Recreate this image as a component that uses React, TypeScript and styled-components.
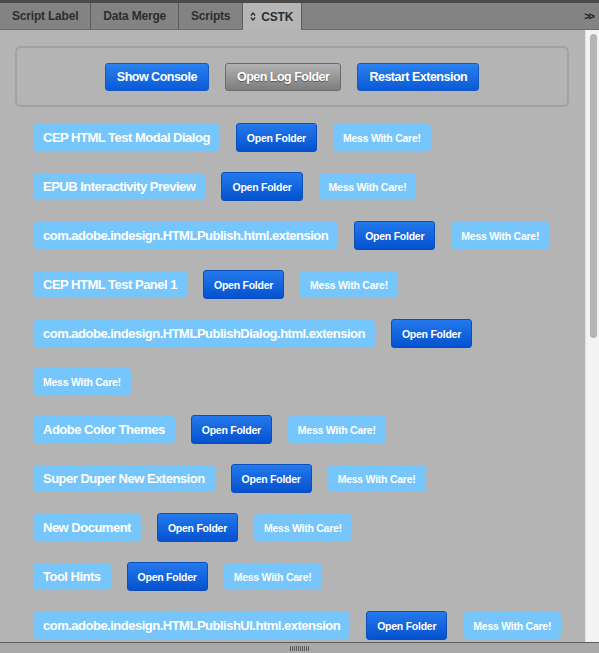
import React from "react";
import styled, { createGlobalStyle } from "styled-components";

const GlobalStyle = createGlobalStyle`
  html, body {
    margin: 0;
    padding: 0;
    background: #b4b4b4;
  }
  body {
    font-family: "Liberation Sans", Arial, Helvetica, sans-serif;
  }
`;

const Frame = styled.div`
  width: 599px;
  height: 653px;
  display: flex;
  flex-direction: column;
  overflow: hidden;
  background: #b4b4b4;
`;

const TopStrip = styled.div`
  height: 3px;
  background: #4a4a4a;
  flex-shrink: 0;
`;

const TabBar = styled.div`
  height: 26px;
  display: flex;
  align-items: stretch;
  background: #838383;
  border-bottom: 1px solid #6a6a6a;
  flex-shrink: 0;
`;

const Tab = styled.div<{ $active?: boolean }>`
  display: flex;
  align-items: center;
  gap: 5px;
  padding: ${({ $active }) => ($active ? "0 8px 0 7px" : "0 12px")};
  font-size: 12px;
  letter-spacing: -0.2px;
  font-weight: bold;
  color: #2e2e2e;
  background: ${({ $active }) => ($active ? "#b6b6b6" : "#838383")};
  border-right: 1px solid #5c5c5c;
  margin-bottom: ${({ $active }) => ($active ? "-1px" : "0")};
`;

const TabSpacer = styled.div`
  flex: 1;
  display: flex;
  align-items: center;
  justify-content: flex-end;
  padding-right: 6px;
  font-size: 11px;
  font-weight: bold;
  color: #1c1c2a;
  letter-spacing: -2px;
`;

const Body = styled.div`
  flex: 1;
  display: flex;
  min-height: 0;
`;

const Content = styled.div`
  flex: 1;
  overflow: hidden;
  padding: 16px 0 0 0;
`;

const Scrollbar = styled.div`
  width: 14px;
  background: #f3f3f3;
  border-left: 1px solid #e2e2e2;
  padding: 4px 2px 0 4px;
  box-sizing: border-box;
  flex-shrink: 0;
`;

const Thumb = styled.div`
  height: 304px;
  background: #b4b4b4;
  border-radius: 4px;
`;

const Panel = styled.div`
  margin: 0 16px 0 15px;
  height: 57px;
  border: 2px solid #a1a1a1;
  border-radius: 6px;
  display: flex;
  align-items: center;
  justify-content: center;
  gap: 16px;
`;

const PanelButton = styled.button<{ $grey?: boolean }>`
  height: 28px;
  padding: 0 11px;
  font-family: inherit;
  font-size: 12.5px;
  letter-spacing: -0.5px;
  font-weight: bold;
  color: #fff;
  border-radius: 3px;
  border: 1px solid ${({ $grey }) => ($grey ? "#6c6c6c" : "#1458c4")};
  background: ${({ $grey }) =>
    $grey
      ? "linear-gradient(#b2b2b2, #7d7d7d)"
      : "linear-gradient(#2a80ee, #0a5ad6)"};
  text-shadow: ${({ $grey }) => ($grey ? "0 1px 1px #555" : "none")};
`;

const List = styled.div`
  display: flex;
  flex-direction: column;
  gap: 20px;
  padding: 16px 18px 0 33px;
`;

const ExtRow = styled.div`
  display: flex;
  flex-wrap: wrap;
  align-items: center;
  column-gap: 16px;
  row-gap: 20px;
`;

const ExtLabel = styled.div`
  height: 27px;
  display: flex;
  align-items: center;
  padding: 0 10px;
  background: #76c6fb;
  border-radius: 4px;
  font-size: 13px;
  letter-spacing: -0.5px;
  font-weight: bold;
  color: #fff;
  white-space: nowrap;
`;

const FolderButton = styled.button`
  height: 29px;
  padding: 0 10px;
  font-family: inherit;
  font-size: 10.5px;
  letter-spacing: -0.25px;
  font-weight: bold;
  color: #fff;
  border-radius: 3px;
  border: 1px solid #0d4fba;
  background: linear-gradient(#2479ec, #0452cf);
`;

const CareButton = styled.button`
  height: 27px;
  padding: 0 10px;
  font-family: inherit;
  font-size: 10.5px;
  letter-spacing: -0.25px;
  font-weight: bold;
  color: #fff;
  border: none;
  border-radius: 4px;
  background: #76c6fb;
`;

const BottomBar = styled.div`
  height: 10px;
  flex-shrink: 0;
  background: #a9a9a9;
  border-top: 1px solid #5d5d5d;
  display: flex;
  justify-content: center;
  align-items: center;
`;

const Grip = styled.div`
  width: 19px;
  height: 5px;
  background: repeating-linear-gradient(
    90deg,
    #5a5a5a 0 1px,
    transparent 1px 2px
  );
`;

const extensions = [
  "CEP HTML Test Modal Dialog",
  "EPUB Interactivity Preview",
  "com.adobe.indesign.HTMLPublish.html.extension",
  "CEP HTML Test Panel 1",
  "com.adobe.indesign.HTMLPublishDialog.html.extension",
  "Adobe Color Themes",
  "Super Duper New Extension",
  "New Document",
  "Tool Hints",
  "com.adobe.indesign.HTMLPublishUI.html.extension",
];

const App = () => (
  <>
    <GlobalStyle />
    <Frame>
      <TopStrip />
      <TabBar>
        <Tab>Script Label</Tab>
        <Tab>Data Merge</Tab>
        <Tab>Scripts</Tab>
        <Tab $active>
          <svg width="6" height="9" viewBox="0 0 6 9">
            <path d="M0.8 3.5 L3 1 L5.2 3.5 M0.8 5.5 L3 8 L5.2 5.5" fill="none" stroke="#2b2b2b" strokeWidth="1.2" />
          </svg>
          CSTK
        </Tab>
        <TabSpacer>&gt;&gt;</TabSpacer>
      </TabBar>
      <Body>
        <Content>
          <Panel>
            <PanelButton>Show Console</PanelButton>
            <PanelButton $grey>Open Log Folder</PanelButton>
            <PanelButton>Restart Extension</PanelButton>
          </Panel>
          <List>
            {extensions.map((name) => (
              <ExtRow key={name}>
                <ExtLabel>{name}</ExtLabel>
                <FolderButton>Open Folder</FolderButton>
                <CareButton>Mess With Care!</CareButton>
              </ExtRow>
            ))}
          </List>
        </Content>
        <Scrollbar>
          <Thumb />
        </Scrollbar>
      </Body>
      <BottomBar>
        <Grip />
      </BottomBar>
    </Frame>
  </>
);

export default App;
